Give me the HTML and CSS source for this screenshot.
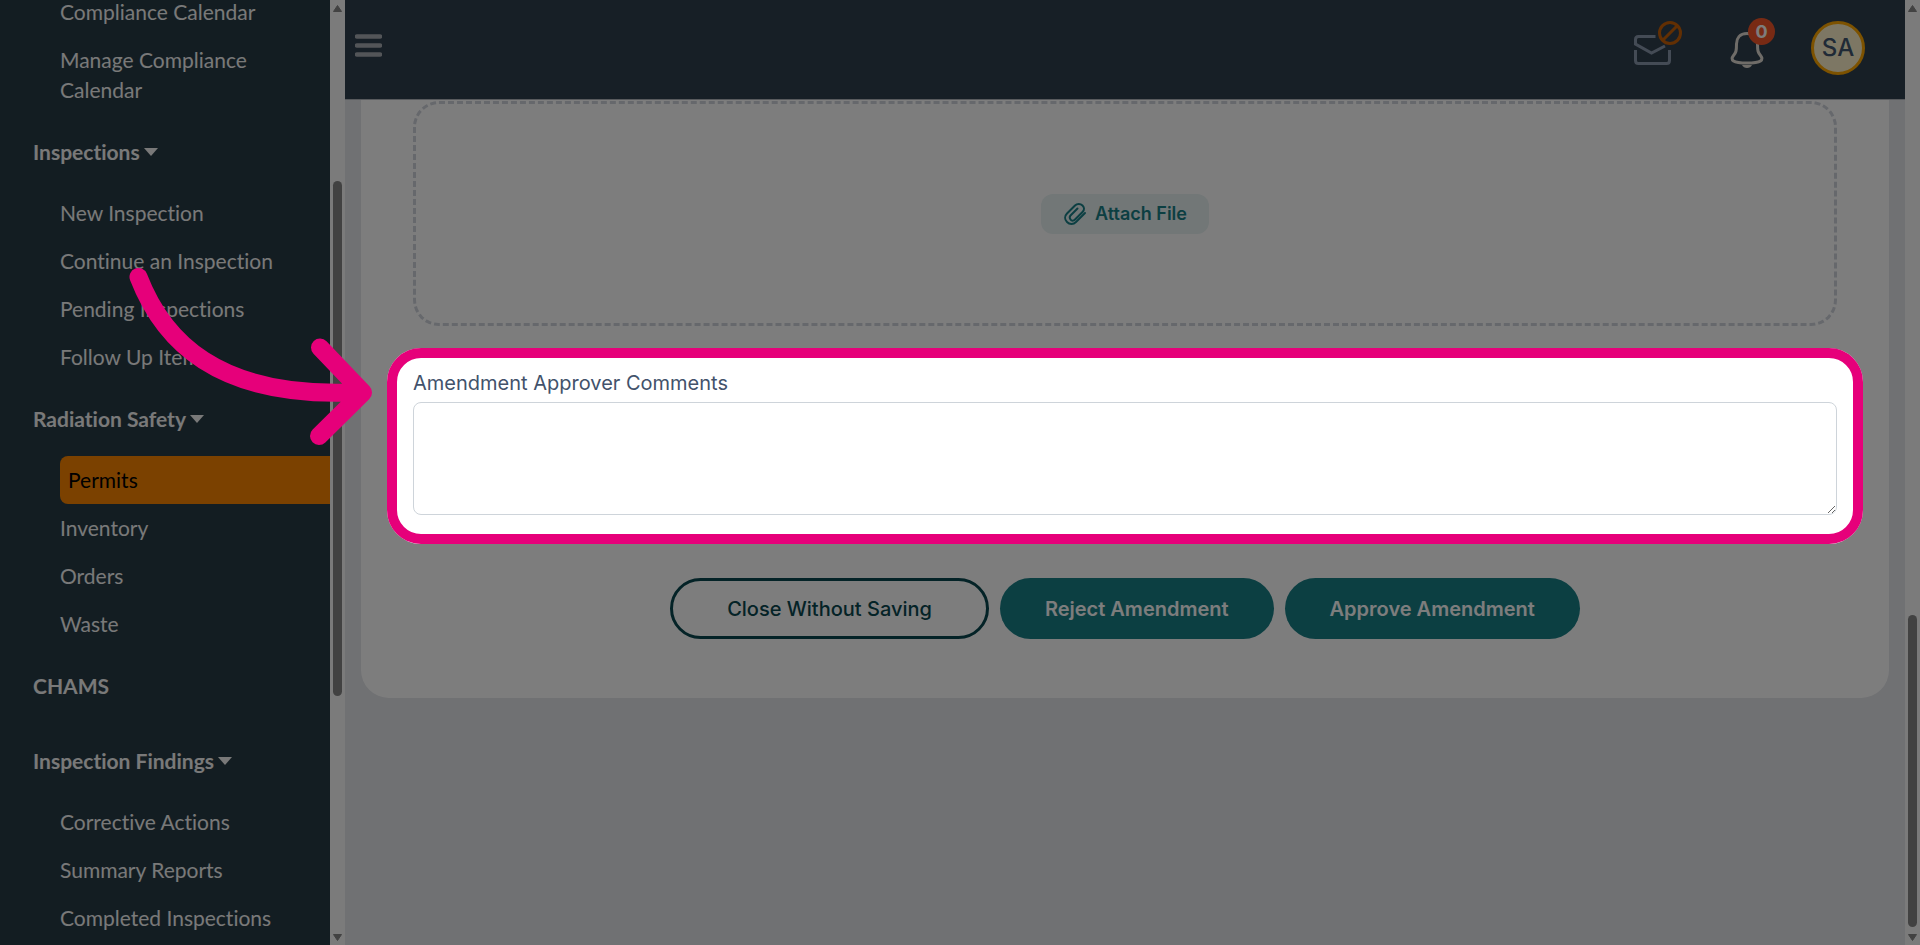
FILE: index.html
```html
<!DOCTYPE html>
<html lang="en">
<head>
    <meta charset="UTF-8">
    <meta name="viewport" content="width=device-width, initial-scale=1.0">
    <title>Permit Amendment</title>
    <link rel="stylesheet" href="styles.css">
</head>
<body>

    <aside class="sidebar">
        <nav class="menu">
            <a href="#" class="menu-link">Compliance Calendar</a>
            <a href="#" class="menu-link">Manage Compliance Calendar</a>

            <button class="menu-heading">Inspections <span class="caret"></span></button>
            <a href="#" class="menu-link">New Inspection</a>
            <a href="#" class="menu-link">Continue an Inspection</a>
            <a href="#" class="menu-link">Pending Inspections</a>
            <a href="#" class="menu-link">Follow Up Items</a>

            <button class="menu-heading">Radiation Safety <span class="caret"></span></button>
            <a href="#" class="menu-link active">Permits</a>
            <a href="#" class="menu-link">Inventory</a>
            <a href="#" class="menu-link">Orders</a>
            <a href="#" class="menu-link">Waste</a>

            <a href="#" class="menu-heading">CHAMS</a>

            <button class="menu-heading">Inspection Findings <span class="caret"></span></button>
            <a href="#" class="menu-link">Corrective Actions</a>
            <a href="#" class="menu-link">Summary Reports</a>
            <a href="#" class="menu-link">Completed Inspections</a>
        </nav>
    </aside>
    <div class="scrollbar" aria-hidden="true">
        <svg class="scroll-arrow" viewBox="0 0 9 7"><path d="M4.5 0.5L8.5 6.5H0.5Z"/></svg>
        <div class="scroll-thumb menu-thumb"></div>
        <svg class="scroll-arrow down" viewBox="0 0 9 7"><path d="M0.5 0.5H8.5L4.5 6.5Z"/></svg>
    </div>

    <div class="page">
        <header class="topbar">
            <button class="icon-button menu-toggle" aria-label="Toggle menu">
                <svg width="27" height="23" viewBox="0 0 27 23"><path d="M2 2.500H25M2 11.500H25M2 20.500H25" stroke="#a9adb3" stroke-width="4.5" stroke-linecap="round"/></svg>
            </button>

            <div class="topbar-actions">
                <button class="icon-button" aria-label="Messages">
                    <svg width="50" height="48" viewBox="0 0 50 48" fill="none">
                        <path d="M22.500 16.500H5.500Q2.500 16.500 2.500 19.500V24L18.500 33L32 26M2.500 30V40.500Q2.500 43.500 5.500 43.500H33.500Q36.500 43.500 36.500 40.500V30" stroke="#8b99ae" stroke-width="3"/>
                        <circle cx="37" cy="13" r="10.500" stroke="#c86008" stroke-width="3"/>
                        <path d="M30 20L44 6" stroke="#c86008" stroke-width="3"/>
                    </svg>
                </button>
                <button class="icon-button" aria-label="Notifications">
                    <svg width="34" height="48" viewBox="0 0 34 48" fill="none">
                        <path d="M17 13.500C9.500 13.500 6.500 18.500 6.500 24C6.500 31 6 32.500 3.500 35.500C0 40 2.500 43 17 43S34 40 30.500 35.500C28 32.500 27.500 31 27.500 24C27.500 18.500 24.500 13.500 17 13.500Z" stroke="#e2ddd5" stroke-width="3"/>
                        <path d="M12 45H22Q20.500 48 17 48T12 45Z" fill="#e2ddd5"/>
                    </svg>
                    <span class="badge">0</span>
                </button>
                <button class="avatar">SA</button>
            </div>
        </header>

        <main class="card">
            <div class="dropzone">
                <button class="attach-button">
                    <svg width="24" height="24" viewBox="0 0 24 24" fill="none" stroke="#1a8088" stroke-width="2" stroke-linecap="round" stroke-linejoin="round"><path d="M22 11L13 20C10.500 22.500 6.500 22.500 4 20S1.500 14 4 11.500L12 3.500C14 1.500 17.500 1.500 19.500 3.500S21.500 8 19.500 10L12 17.500C10.500 19 8.500 19 7.500 17.500S6.500 14.500 7.500 13.500L14.500 6.500"/></svg>
                    Attach File
                </button>
            </div>

            <div class="comment-field">
                <label for="comments">Amendment Approver Comments</label>
                <textarea id="comments" rows="4"></textarea>
            </div>

            <div class="form-actions">
                <button class="btn btn-outline">Close Without Saving</button>
                <button class="btn">Reject Amendment</button>
                <button class="btn">Approve Amendment</button>
            </div>
        </main>
    </div>
    <div class="scrollbar" aria-hidden="true">
        <svg class="scroll-arrow" viewBox="0 0 9 7"><path d="M4.5 0.5L8.5 6.5H0.5Z"/></svg>
        <div class="scroll-thumb page-thumb"></div>
        <svg class="scroll-arrow down" viewBox="0 0 9 7"><path d="M0.5 0.5H8.5L4.5 6.5Z"/></svg>
    </div>

    <svg class="pointer-arrow" width="260" height="190" viewBox="120 260 260 190" aria-hidden="true">
        <path d="M138.500 277C162 338 215 400 360 392M320 347.500L363 392.500L319 436"/>
    </svg>

</body>
</html>
```

FILE: styles.css
```css
* {
    box-sizing: border-box;
}
body {
    margin: 0;
    display: flex;
    height: 100vh;
    overflow: hidden;
    font-family: Inter, "Liberation Sans", sans-serif;
    background: #e4e6ea;
}
button {
    font-family: inherit;
    cursor: pointer;
}

/* sidebar */
.sidebar {
    flex: 0 0 330px;
    overflow: hidden;
    background: #283c46;
}
.menu {
    display: flex;
    flex-direction: column;
    margin-top: -12px;
    font-family: Lato, sans-serif;
    font-size: 21px;
    line-height: 30px;
    font-variant-ligatures: none;
}
.menu-link {
    margin-left: 60px;
    padding: 9px 30px 9px 0;
    color: #f6f6f6;
    text-decoration: none;
}
.menu-link.active {
    padding-left: 8px;
    color: #000;
    background: #fb8500;
    border-radius: 8px 0 0 8px;
}
.menu-heading {
    display: flex;
    align-items: center;
    gap: 4px;
    padding: 23px 0 22px 33px;
    border: none;
    background: none;
    color: #f6f6f6;
    font: inherit;
    font-variant-ligatures: none;
    font-weight: bold;
    text-decoration: none;
}
.caret {
    border: 7px solid transparent;
    border-top: 8px solid #f6f6f6;
    border-bottom: none;
}

/* scrollbars */
.scrollbar {
    flex: 0 0 15px;
    display: flex;
    flex-direction: column;
    align-items: center;
    padding: 5px 0 4px;
    background: #fafafa;
}
.scroll-arrow {
    width: 9px;
    height: 7px;
    fill: #888;
    stroke: #888;
    stroke-linejoin: round;
}
.scroll-arrow.down {
    margin-top: auto;
}
.scroll-thumb {
    width: 9px;
    border-radius: 5px;
    background: #888;
}
.menu-thumb {
    height: 55%;
    margin-top: 169px;
}
.page-thumb {
    height: 312px;
    margin-top: auto;
}
.page-thumb + .scroll-arrow {
    margin-top: 7px;
}

/* top bar */
.page {
    flex: 1;
    min-width: 0;
}
.topbar {
    display: flex;
    align-items: center;
    justify-content: space-between;
    height: 100px;
    padding: 0 40px 0 10px;
    background: #30404e;
    border-bottom: 1px solid #b4b8bd;
}
.topbar-actions {
    display: flex;
    align-items: center;
    gap: 47px;
}
.icon-button {
    display: block;
    position: relative;
    padding: 0;
    border: none;
    background: none;
}
.icon-button svg {
    display: block;
}
.menu-toggle {
    margin-bottom: 8px;
}
.topbar-actions .icon-button {
    margin-bottom: 12px;
}
.badge {
    position: absolute;
    top: -2px;
    right: -11px;
    width: 27px;
    border-radius: 14px;
    background: #f4572a;
    color: #fff;
    font-size: 18px;
    font-weight: bold;
    line-height: 27px;
    text-align: center;
}
.avatar {
    width: 54px;
    height: 54px;
    margin-bottom: 4px;
    padding: 0;
    border: 3px solid #ffa800;
    border-radius: 50%;
    background: #fff3cd;
    color: #42566f;
    font-size: 24px;
    font-weight: 500;
}

/* form card */
.card {
    margin: 0 16px;
    padding: 1px 52px 59px;
    background: #fff;
    border-radius: 0 0 28px 28px;
}
.dropzone {
    display: flex;
    align-items: center;
    justify-content: center;
    height: 225px;
    border: 3px dashed #d0d4dc;
    border-radius: 26px;
}
.attach-button {
    display: flex;
    align-items: center;
    gap: 8px;
    height: 40px;
    padding: 0 22px;
    border: none;
    border-radius: 12px;
    background: #e8f2f3;
    color: #1a8088;
    font-size: 18px;
    font-weight: 600;
}
.comment-field {
    position: relative;
    margin-top: 42px;
}
.comment-field label {
    display: block;
    margin-bottom: 4px;
    color: #42526b;
    font-size: 20px;
    line-height: 30px;
}
.comment-field textarea {
    display: block;
    width: 100%;
    padding: 8px 12px 7px;
    border: 1px solid #ced4da;
    border-radius: 8px;
    font-family: inherit;
    font-size: 16px;
    line-height: 24px;
    resize: vertical;
}
/* highlight ring, everything outside of it is dimmed */
.comment-field::after {
    content: "";
    position: absolute;
    inset: -20px -26px -29px;
    z-index: 10;
    border: 10px solid #e6007a;
    border-radius: 34px;
    box-shadow: 0 0 0 2000px rgba(0, 0, 0, 0.51);
    pointer-events: none;
}
.form-actions {
    display: flex;
    justify-content: center;
    gap: 11px;
    margin-top: 63px;
}
.btn {
    height: 61px;
    padding: 0 45px;
    border: none;
    border-radius: 31px;
    background: #1a8088;
    color: #fff;
    font-size: 20px;
    font-weight: 600;
}
.btn-outline {
    padding: 0 54px;
    border: 3px solid #0a4850;
    background: none;
    color: #0a4850;
    font-weight: 500;
}

.pointer-arrow {
    position: absolute;
    top: 260px;
    left: 120px;
    z-index: 11;
    fill: none;
    stroke: #e6007a;
    stroke-width: 18;
    stroke-linecap: round;
    stroke-linejoin: round;
}
```
